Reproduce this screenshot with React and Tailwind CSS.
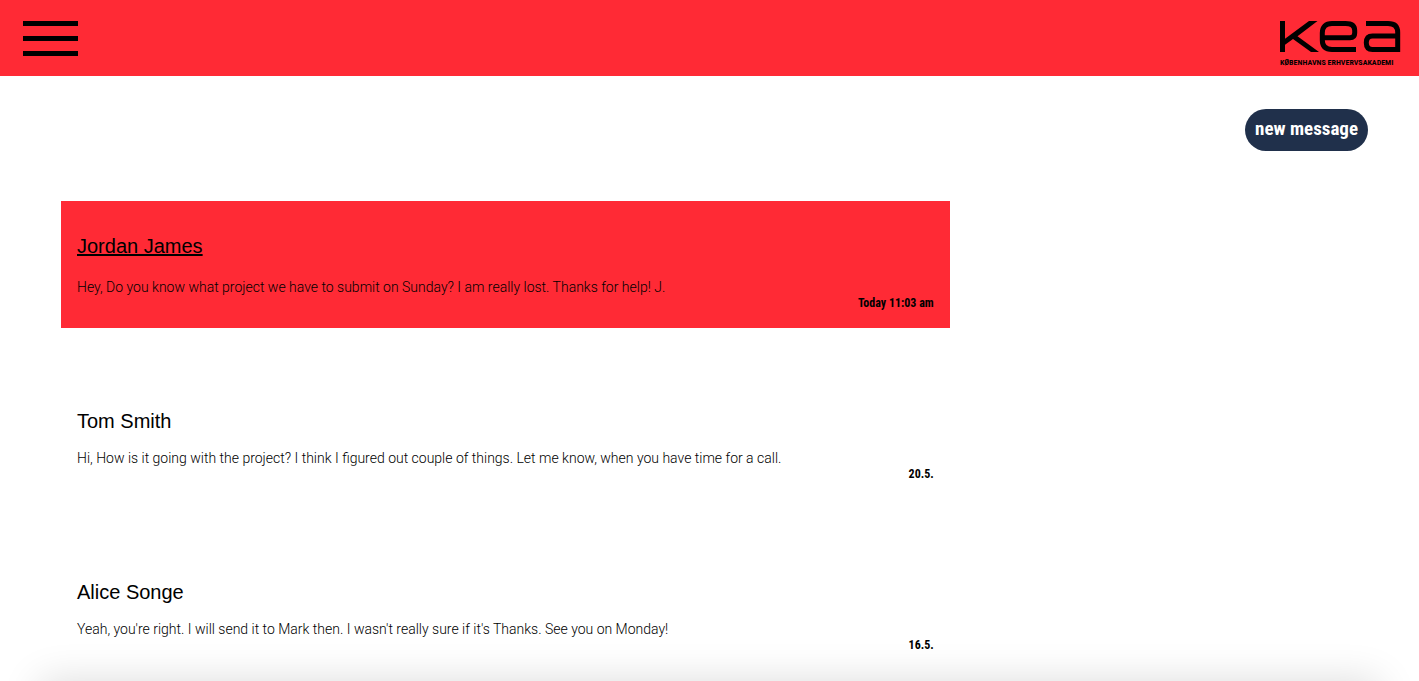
const messages = [
  {
    name: "Jordan James",
    text: "Hey, Do you know what project we have to submit on Sunday? I am really lost. Thanks for help! J.",
    time: "Today 11:03 am",
    active: true,
  },
  {
    name: "Tom Smith",
    text: "Hi, How is it going with the project? I think I figured out couple of things. Let me know, when you have time for a call.",
    time: "20.5.",
  },
  {
    name: "Alice Songe",
    text: "Yeah, you're right. I will send it to Mark then. I wasn't really sure if it's Thanks. See you on Monday!",
    time: "16.5.",
  },
];

function Logo() {
  return (
    <a href="#home" aria-label="KEA home" className="flex w-[121px] flex-col pt-px text-black">
      <svg viewBox="0 0 121 31" className="h-[31px] w-full" fill="none" stroke="currentColor" strokeWidth="5" aria-hidden="true">
        <path d="M2.5 0V31" />
        <path d="M29 0H37.500L17.500 15.300 39 31H31L13 18 4 24.500V18.500Z" fill="currentColor" stroke="none" />
        <path d="M76 28.500H52Q42.300 28.500 42.300 19V12Q42.300 2.600 52 2.600H65.500Q74.700 2.600 74.700 9.500V12Q74.700 16.700 70 16.700H43" />
        <path d="M86 2.600H108Q117.700 2.600 117.700 11.500V28.500H92.500Q86.300 28.500 86.300 21.800Q86.300 15 92.500 15H117" />
      </svg>
      <span className="mt-[6px] whitespace-nowrap font-['Roboto_Condensed',Roboto,sans-serif] text-[8px] leading-[9px] font-bold">
        KØBENHAVNS ERHVERVSAKADEMI
      </span>
    </a>
  );
}

function Message({ name, text, time, active }) {
  return (
    <article className={`px-4 pt-[33px] pb-[17px] ${active ? "bg-[#ff2a35]" : ""}`}>
      <h2 className={`font-['Liberation_Sans',Arial,sans-serif] text-xl leading-6 ${active ? "mb-[21px] underline decoration-2 underline-offset-1 [text-decoration-skip-ink:none]" : "mb-[17px]"}`}>{name}</h2>
      <p className="text-sm leading-4 font-light">{text}</p>
      <p className="text-right font-['Roboto_Condensed',Roboto,sans-serif] text-xs leading-4 font-bold">{time}</p>
    </article>
  );
}

export default function App() {
  return (
    <div className="bg-white font-[Roboto,'Liberation_Sans',sans-serif] text-black">
      <header className="flex h-[76px] items-start justify-between bg-[#ff2a35] pt-5 pr-[18px] pl-[23px]">
        <button type="button" aria-label="Menu" className="mt-px flex w-[55px] flex-col gap-2.5">
          <span className="h-[5px] w-full bg-black" />
          <span className="h-[5px] w-full bg-black" />
          <span className="h-[5px] w-full bg-black" />
        </button>
        <Logo />
      </header>
      <main className="pt-[33px] pr-[51px] pl-[61px]">
        <div className="flex justify-end">
          <button type="button" className="h-[42px] rounded-full bg-[#20304b] px-2.5 pb-0.5 font-['Roboto_Condensed',Roboto,sans-serif] text-[19px] font-bold text-white">
            new message
          </button>
        </div>
        <section aria-label="Messages" className="mt-[50px] flex w-[68%] flex-col gap-12">
          {messages.map((m) => (
            <Message key={m.name} {...m} />
          ))}
        </section>
      </main>
      <div className="pointer-events-none fixed inset-x-10 top-full h-20 shadow-[0_0_40px_rgba(0,0,0,0.14)]" />
    </div>
  );
}
